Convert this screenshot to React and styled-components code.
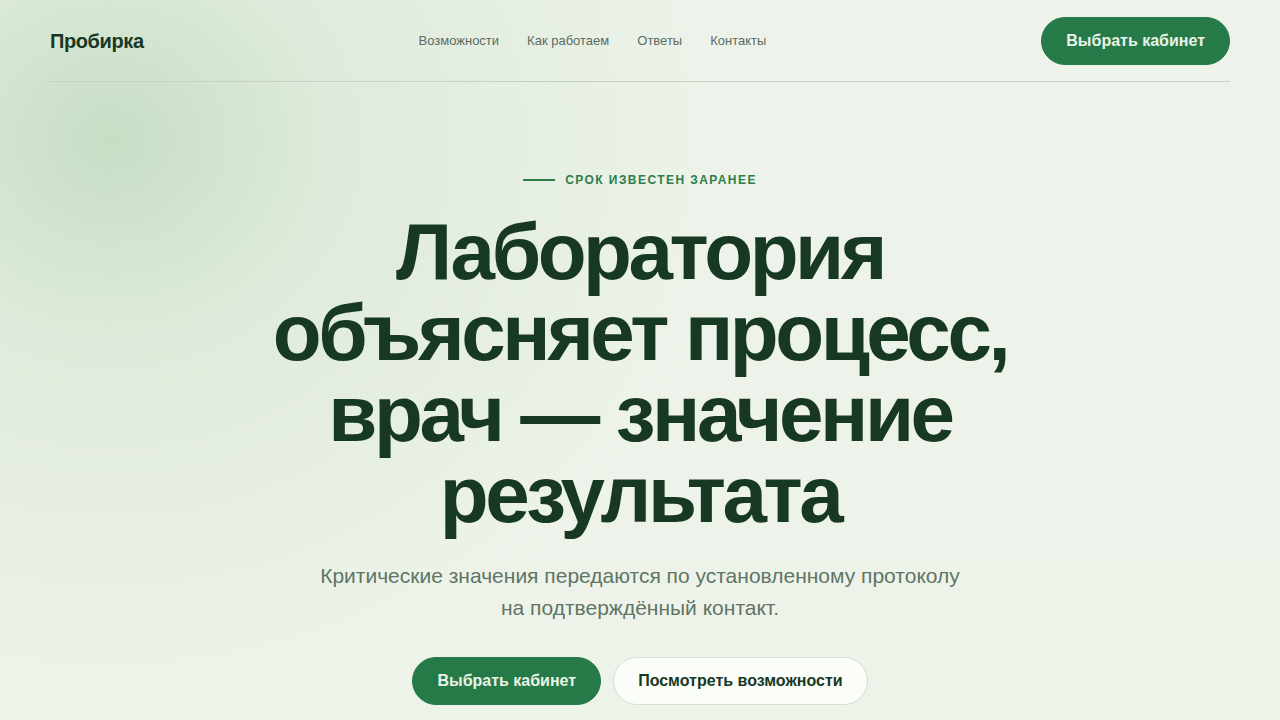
import React from "react";
import styled, { createGlobalStyle } from "styled-components";

const GlobalStyle = createGlobalStyle`
  * { box-sizing: border-box; }
  html, body { margin: 0; padding: 0; }
  body {
    font-family: "Liberation Sans", Arial, sans-serif;
    background: #eef3ea;
    color: #173824;
  }
`;

const Page = styled.div`
  min-height: 720px;
  overflow: hidden;
  background:
    radial-gradient(ellipse 620px 560px at 110px 140px, rgba(182, 212, 180, 0.7) 0, rgba(204, 224, 200, 0.45) 35%, rgba(238, 243, 234, 0) 100%),
    linear-gradient(180deg, #edf3ea 0%, #eef3ea 100%);
`;

const Header = styled.header`
  margin: 0 50px;
  height: 82px;
  display: flex;
  align-items: center;
  justify-content: space-between;
  border-bottom: 1px solid #c6d2c4;
`;

const Logo = styled.div`
  font-size: 20px;
  font-weight: 700;
  letter-spacing: -0.02em;
  color: #173824;
  padding-top: 2px;
`;

const Nav = styled.nav`
  display: flex;
  gap: 28px;
`;

const NavLink = styled.a`
  font-size: 13px;
  color: #5c6c61;
  text-decoration: none;
`;

const Button = styled.a`
  display: inline-flex;
  align-items: center;
  justify-content: center;
  height: 48px;
  padding: 0 24px;
  border-radius: 24px;
  font-size: 16px;
  font-weight: 700;
  text-decoration: none;
  background: ${(p) => (p.$ghost ? "#fbfdf8" : "#267a47")};
  color: ${(p) => (p.$ghost ? "#173824" : "#e9f3e6")};
  border: 1px solid ${(p) => (p.$ghost ? "#d6ded3" : "#267a47")};
`;

const Hero = styled.section`
  display: flex;
  flex-direction: column;
  align-items: center;
  text-align: center;
  padding-top: 91px;
`;

const Eyebrow = styled.div`
  display: flex;
  align-items: center;
  gap: 10px;
  font-size: 12px;
  font-weight: 700;
  letter-spacing: 0.12em;
  color: #2e7d4a;
  text-transform: uppercase;
  &::before {
    content: "";
    width: 32px;
    height: 2px;
    background: #2e7d4a;
  }
`;

const Title = styled.h1`
  margin: 24px 0 0;
  font-size: 80px;
  line-height: 81px;
  font-weight: 700;
  letter-spacing: -0.043em;
  color: #173824;
  max-width: 800px;
`;

const Lead = styled.p`
  margin: 25px 0 0;
  font-size: 21px;
  line-height: 32px;
  color: #5f7565;
  max-width: 660px;
`;

const Actions = styled.div`
  display: flex;
  gap: 12px;
  margin-top: 33px;
`;

export default function App() {
  return (
    <Page>
      <GlobalStyle />
      <Header>
        <Logo>Пробирка</Logo>
        <Nav>
          <NavLink href="#">Возможности</NavLink>
          <NavLink href="#">Как работаем</NavLink>
          <NavLink href="#">Ответы</NavLink>
          <NavLink href="#">Контакты</NavLink>
        </Nav>
        <Button href="#">Выбрать кабинет</Button>
      </Header>
      <Hero>
        <Eyebrow>Срок известен заранее</Eyebrow>
        <Title>
          Лаборатория объясняет процесс, врач — значение результата
        </Title>
        <Lead>
          Критические значения передаются по установленному протоколу
          на подтверждённый контакт.
        </Lead>
        <Actions>
          <Button href="#">Выбрать кабинет</Button>
          <Button href="#" $ghost>
            Посмотреть возможности
          </Button>
        </Actions>
      </Hero>
    </Page>
  );
}
